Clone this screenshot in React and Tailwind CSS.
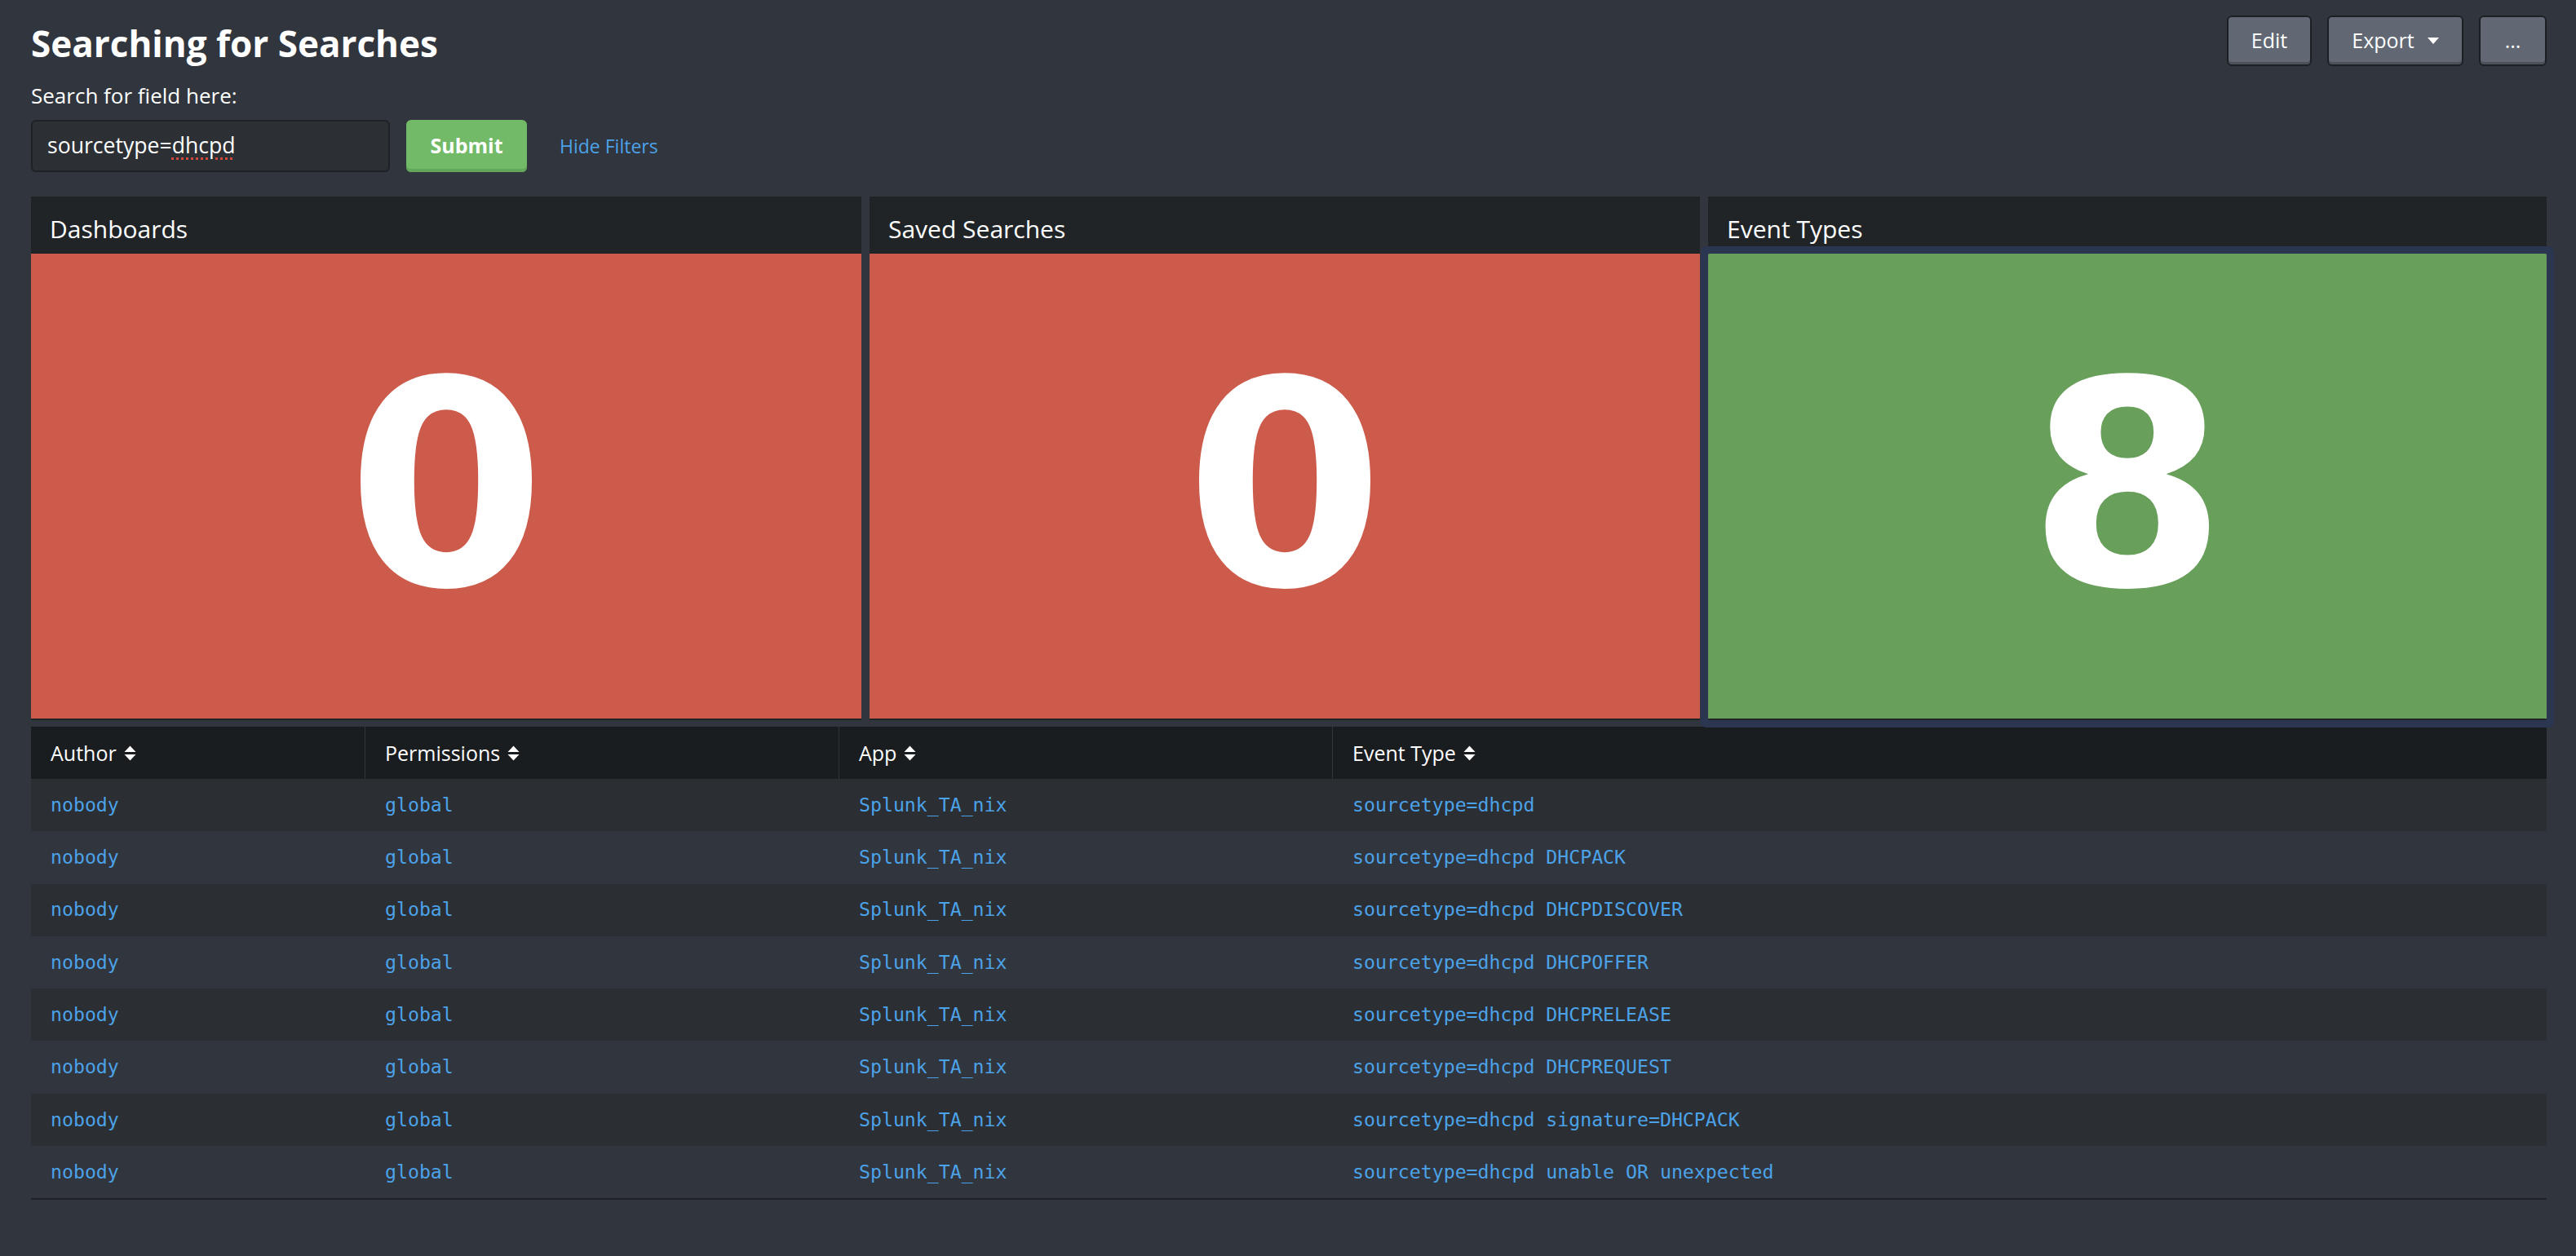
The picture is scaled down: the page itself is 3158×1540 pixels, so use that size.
import React from "react";

const rows = [
  "sourcetype=dhcpd",
  "sourcetype=dhcpd DHCPACK",
  "sourcetype=dhcpd DHCPDISCOVER",
  "sourcetype=dhcpd DHCPOFFER",
  "sourcetype=dhcpd DHCPRELEASE",
  "sourcetype=dhcpd DHCPREQUEST",
  "sourcetype=dhcpd signature=DHCPACK",
  "sourcetype=dhcpd unable OR unexpected",
];

function SortIcon() {
  return (
    <svg width="15" height="19" viewBox="0 0 15 19" className="shrink-0">
      <path d="M7.5 0.5 L14.5 8 L0.5 8 Z" fill="#ffffff" />
      <path d="M0.5 11 L14.5 11 L7.5 18.5 Z" fill="#ffffff" />
    </svg>
  );
}

function Panel({ title, value, green, last }) {
  return (
    <div className={last ? "" : "pr-[10px]"}>
      <div className="h-[70px] bg-[#212427] pl-[23px] pt-[9px] flex items-center">
        <span className="text-[30px] leading-none text-white">{title}</span>
      </div>
      <div
        className={
          green
            ? "h-[572px] bg-[#689f5a] border-b-2 border-[#212427] rounded-[2px] shadow-[0_0_0_9px_#2b3650] flex items-center justify-center"
            : "h-[572px] bg-[#cd5b4b] border-b-2 border-[#212427] flex items-center justify-center"
        }
      >
        <span className="font-['DejaVu_Sans',sans-serif] font-bold text-[350px] leading-none text-white">
          {value}
        </span>
      </div>
    </div>
  );
}

const btn =
  "h-[62px] rounded-[6px] border-2 border-[#1c1f23] bg-[#616874] shadow-[inset_0_-3px_0_#4c525c] text-[25px] text-white flex items-center justify-center";

export default function App() {
  return (
    <div className="min-h-[1540px] bg-[#31353d] pl-[38px] pr-[36px] text-white font-['Open_Sans',sans-serif]">
      <div className="flex justify-between items-start pt-[19px]">
        <div className="flex flex-col">
          <h1 className="mt-[12px] text-[44px] font-bold leading-none text-white">
            Searching for Searches
          </h1>
          <div className="mt-[29px] text-[26px] leading-none text-white">
            Search for field here:
          </div>
          <div className="mt-[17px] flex items-center">
            <div className="w-[440px] h-[64px] rounded-[6px] border-2 border-[#1e2125] bg-[#2c2f33] pl-[18px] flex items-center text-[26.6px] text-white">
              <span>
                sourcetype=
                <span className="underline decoration-dotted decoration-[#d04a3c] decoration-[3px] underline-offset-[5px]">
                  dhcpd
                </span>
              </span>
            </div>
            <div className="ml-[20px] w-[148px] h-[64px] rounded-[6px] bg-[#72ba67] shadow-[inset_0_-4px_0_#64a75a] flex items-center justify-center text-[25px] font-bold text-white">
              Submit
            </div>
            <div className="ml-[40px] text-[23px] text-[#4ca2e8]">Hide Filters</div>
          </div>
        </div>
        <div className="flex gap-[19px]">
          <div className={btn + " w-[104px]"}>Edit</div>
          <div className={btn + " w-[167px] gap-[16px]"}>
            <span>Export</span>
            <svg width="14" height="8" viewBox="0 0 14 8">
              <path d="M0 0 L14 0 L7 8 Z" fill="#ffffff" />
            </svg>
          </div>
          <div className={btn + " w-[83px]"}>...</div>
        </div>
      </div>

      <div className="mt-[30px] grid grid-cols-3">
        <Panel title="Dashboards" value="0" />
        <Panel title="Saved Searches" value="0" />
        <Panel title="Event Types" value="8" green last />
      </div>

      <div className="mt-[8px] border-b-2 border-[#1e2125]">
        <div className="grid grid-cols-[409px_581px_605px_1fr] h-[64px] bg-[#1a1d20] text-[25px] text-white">
          {["Author", "Permissions", "App", "Event Type"].map((h, i) => (
            <div
              key={h}
              className={
                i === 0
                  ? "pl-[24px] flex items-center gap-[9px]"
                  : "pl-[24px] flex items-center gap-[9px] border-l border-[#30353b]"
              }
            >
              <span className="leading-none">{h}</span>
              <SortIcon />
            </div>
          ))}
        </div>
        {rows.map((r, i) => (
          <div
            key={r}
            className={
              i % 2 === 0
                ? "grid grid-cols-[409px_581px_605px_1fr] h-[64.3px] bg-[#2b2e32] font-['DejaVu_Sans_Mono',monospace] text-[23.2px] text-[#4ca2e8]"
                : "grid grid-cols-[409px_581px_605px_1fr] h-[64.3px] font-['DejaVu_Sans_Mono',monospace] text-[23.2px] text-[#4ca2e8]"
            }
          >
            <div className="pl-[24px] flex items-center">nobody</div>
            <div className="pl-[25px] flex items-center">global</div>
            <div className="pl-[25px] flex items-center">Splunk_TA_nix</div>
            <div className="pl-[25px] flex items-center whitespace-pre">{r}</div>
          </div>
        ))}
      </div>
    </div>
  );
}
